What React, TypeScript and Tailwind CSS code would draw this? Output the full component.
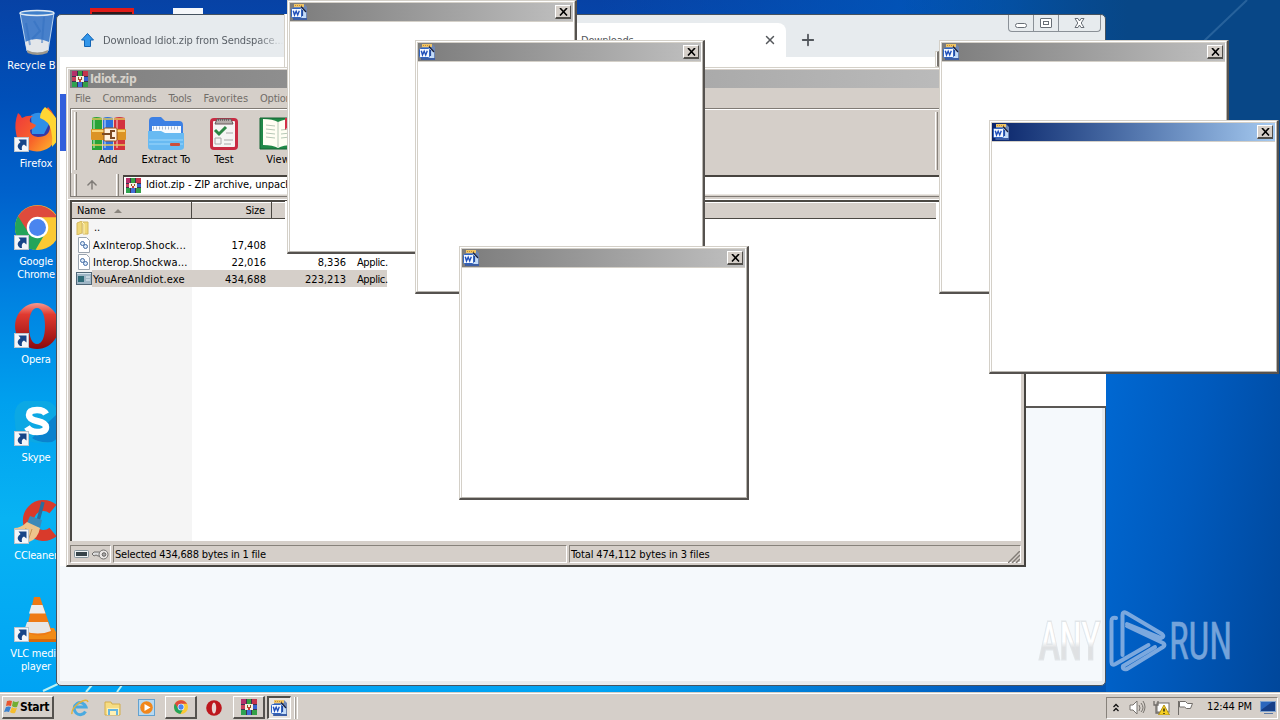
import type { ReactNode } from 'react';
import { ArrowUp, Plus, X } from 'lucide-react';
import clsx from 'clsx';

const popups = [
  { place: 'left-[287px] top-0', active: false },
  { place: 'left-[415px] top-[40px]', active: false },
  { place: 'left-[459px] top-[246px]', active: false },
  { place: 'left-[939px] top-[40px]', active: false },
  { place: 'left-[989px] top-[120px]', active: true },
];

const files = [
  { name: 'AxInterop.Shock...', size: '17,408', packed: '', type: '', kind: 'dll' },
  { name: 'Interop.Shockwa...', size: '22,016', packed: '8,336', type: 'Applic.', kind: 'dll' },
  { name: 'YouAreAnIdiot.exe', size: '434,688', packed: '223,213', type: 'Applic.', kind: 'exe' },
];

function WinRar({ className }: { className?: string }) {
  return (
    <svg viewBox="0 0 16 16" className={className} shapeRendering="crispEdges">
      <rect width="16" height="16" fill="#3c3350" />
      <rect x="0" y="0" width="5" height="5" fill="#b5306b" />
      <rect x="6" y="0" width="4" height="5" fill="#35a041" />
      <rect x="11" y="0" width="5" height="5" fill="#c4344c" />
      <rect x="0" y="6" width="16" height="4" fill="#3763cf" />
      <rect x="0" y="6" width="4" height="4" fill="#cb3f5c" />
      <rect x="0" y="11" width="5" height="5" fill="#2fa350" />
      <rect x="6" y="11" width="4" height="5" fill="#406ed8" />
      <rect x="11" y="11" width="5" height="5" fill="#35a048" />
      <rect x="4" y="5" width="8" height="6" fill="#f6efe2" />
      <rect x="6" y="6" width="1" height="3" fill="#8a5a26" />
      <rect x="9" y="6" width="1" height="3" fill="#8a5a26" />
      <rect x="7" y="8" width="2" height="3" fill="#cc3c38" />
    </svg>
  );
}

function WordIcon({ className }: { className?: string }) {
  return (
    <svg viewBox="0 0 16 16" className={className}>
      <path d="M3 0h10l3 3v13H3z" fill="#6d86b4" />
      <path d="M3 0h10v3H3z" fill="#eec569" />
      <path d="M4 1.500h8" stroke="#c98d2c" strokeDasharray="1 1" />
      <path d="M8 4h3l4 4v6H8z" fill="#c4dcf8" />
      <path d="M10 2.500l5 5.500" stroke="#1c2038" strokeWidth="1.200" />
      <path d="M11.500 6v6" stroke="#244aa0" strokeWidth="1.200" />
      <rect x=".5" y="4.500" width="10" height="9" rx="1" fill="#f5f9ff" stroke="#3064c0" />
      <path d="M2.300 6.700l1.200 4.200 1.700-3.600 1.500 3.600 1.600-4.200" fill="none" stroke="#1f4fba" strokeWidth="1.400" />
      <path d="M2 15h14" stroke="#2c51a0" strokeWidth="1.500" />
    </svg>
  );
}

function ChromeIcon({ className }: { className?: string }) {
  return (
    <svg viewBox="0 0 44 44" className={className}>
      <circle cx="22" cy="22" r="22" fill="#fbc934" />
      <path d="M22 22L3 11A22 22 0 0 0 20 44l10-17z" fill="#23a45a" />
      <path d="M22 12h19A22 22 0 0 0 3 11l10 16z" fill="#de4b3c" />
      <circle cx="22" cy="22" r="10.5" fill="#fff" />
      <circle cx="22" cy="22" r="8.3" fill="#4a85ef" />
    </svg>
  );
}

function OperaIcon({ className }: { className?: string }) {
  return (
    <svg viewBox="0 0 44 46" className={className}>
      <defs>
        <linearGradient id="opera" x2="0" y2="1">
          <stop offset="0" stopColor="#f59a90" />
          <stop offset=".25" stopColor="#e03a30" />
          <stop offset="1" stopColor="#8c0a0e" />
        </linearGradient>
      </defs>
      <path
        d="M22 0a22 23 0 1 0 .1 0zM22 5c5 0 8 7 8 18s-3 18-8 18-8-7-8-18 3-18 8-18z"
        fill="url(#opera)"
        fillRule="evenodd"
      />
    </svg>
  );
}

function RecycleBin() {
  return (
    <svg viewBox="0 0 48 48" className="h-12 w-12">
      <path d="M8 4h34l-6 38q-11 5-21 0z" fill="#7fb0e6" fillOpacity=".55" stroke="#b7d3ef" />
      <path d="M13 33q11-6 24 0l-1 9q-11 4-21 0z" fill="#e3e6ea" />
      <path d="M14 14l4 22M32 8l-2 26M22 12l6 10-8 8" stroke="#2f6dc0" strokeOpacity=".5" fill="none" strokeWidth="2" />
      <ellipse cx="25" cy="4" rx="17" ry="2.5" fill="#3f7fca" stroke="#dfeaf4" strokeWidth="1.3" />
      <path d="M15 41q10 5 21 0l-.5 3q-10 4-20 0z" fill="#9c978c" />
    </svg>
  );
}

function FirefoxIcon() {
  return (
    <svg viewBox="0 0 48 48" className="h-12 w-12">
      <defs>
        <linearGradient id="fox" x1="0" y1=".2" x2="1" y2="1">
          <stop offset="0" stopColor="#ee3a3c" />
          <stop offset=".5" stopColor="#f8632a" />
          <stop offset="1" stopColor="#ffc52c" />
        </linearGradient>
      </defs>
      <circle cx="26" cy="23" r="15" fill="#3338a6" />
      <path d="M19 8q12-7 19 7l-6 12H20z" fill="#2e8fe8" />
      <path d="M6 6q3 2 4 5 5-3 11-2-4 2-3 6l6 3q-1 3-6 5 0 6 8 7 12 0 12-11 0-8-5-12 0-4 3-7 8 8 10 20 0 13-8 20-10 7-21 3Q5 39 4 26 2 16 6 6z" fill="url(#fox)" />
      <path d="M28 11q0-6 5-11 13 10 15 20 0 13-8 20 1-9-1-17-2-9-11-12z" fill="#ffd633" />
    </svg>
  );
}

function SkypeIcon() {
  return (
    <svg viewBox="0 0 48 48" className="h-12 w-12">
      <path d="M12 0q12-3 26 1 12 8 10 22 0 12-8 18-12 3-24-1Q3 38 3 21 0 4 12 0z" fill="#0ca8e4" />
      <path d="M44 14q6 4 4 14 0 9-8 13-14 1-20-4z" fill="#0a82ce" />
      <path
        d="M34 13q-2-4-9-4-8 0-8 5 0 4 8 6 9 2 9 6 0 5-9 5-7 0-10-5"
        fill="none"
        stroke="#fff"
        strokeWidth="6.500"
      />
    </svg>
  );
}

function CCleanerIcon() {
  return (
    <svg viewBox="0 0 48 48" className="h-12 w-12">
      <path d="M41 10A15 15 0 1 0 41 33" fill="none" stroke="#d93a2b" strokeWidth="11" />
      <path d="M31 3L26 22" stroke="#2c6d9c" strokeWidth="3.5" />
      <path d="M18 17l12 4-2 8-13-5z" fill="#3d89b8" />
      <path d="M15 23l13 6q-2 11-11 14Q7 40 2 29q7 0 13-6z" fill="#edc48c" />
      <path d="M14 29l-3 9M20 30l-4 12" stroke="#c79556" />
    </svg>
  );
}

function VlcIcon() {
  return (
    <svg viewBox="0 0 48 48" className="h-12 w-12">
      <path d="M12 31h30l6 12H8z" fill="#f08a16" />
      <path d="M8 42h42v3H8z" fill="#d76a0c" />
      <path d="M22 0q3-3 6 0l12 35q-13 7-26 0z" fill="#ee7a14" />
      <path d="M19.500 8h11l3 8.500H17z" fill="#eeeeee" />
      <path d="M15 25h21l3 9q-13 5-27 0z" fill="#e6e6e6" />
    </svg>
  );
}

const shortcuts: { label: string; icon: ReactNode; link: boolean; width: string }[] = [
  { label: 'Recycle Bin', icon: <RecycleBin />, link: false, width: 'whitespace-nowrap tracking-[0.05px]' },
  { label: 'Firefox', icon: <FirefoxIcon />, link: true, width: 'whitespace-nowrap tracking-[0px]' },
  { label: 'Google Chrome', icon: <ChromeIcon className="ml-[3px] h-[45px] w-[45px]" />, link: true, width: 'w-[50px]' },
  { label: 'Opera', icon: <OperaIcon className="ml-[3px] h-[46px] w-[44px]" />, link: true, width: 'whitespace-nowrap' },
  { label: 'Skype', icon: <SkypeIcon />, link: true, width: 'whitespace-nowrap' },
  { label: 'CCleaner', icon: <CCleanerIcon />, link: true, width: 'whitespace-nowrap' },
  { label: 'VLC media player', icon: <VlcIcon />, link: true, width: 'w-[60px]' },
];

function Shortcuts() {
  return (
    <div className="flex w-[72px] flex-col pt-[9px]">
      {shortcuts.map((s) => (
        <div key={s.label} className="flex h-[98px] flex-col items-center">
          <div className="relative h-[50px] w-12">
            {s.icon}
            {s.link && (
              <svg viewBox="0 0 15 15" className="absolute bottom-[5px] left-[2px] h-[15px] w-[15px]">
                <rect x=".5" y=".5" width="14" height="14" fill="#f4f6f9" stroke="#bcc4cd" />
                <path d="M4.500 2.500h8v7l-2.500-2q-3 1-2 5.500h-2q-5-4 .5-8z" fill="#174587" />
              </svg>
            )}
          </div>
          <span className={clsx('text-center leading-[13px] text-white', s.width)}>{s.label}</span>
        </div>
      ))}
    </div>
  );
}

function Browser() {
  return (
    <div className="absolute left-[56px] top-[14px] flex h-[672px] w-[1050px] flex-col overflow-hidden rounded-[5px] border border-[#45525f] bg-[#e7ebee]">
      <div className="flex h-[42px] shrink-0 items-start">
        <div className="flex h-full w-[226px] items-center pl-[23px] pt-2">
          <svg viewBox="0 0 14 14" className="h-[14px] w-[15px] shrink-0">
            <path d="M7 .5L13 7h-3v6.5H4V7H1z" fill="#3296ea" stroke="#1264b4" />
          </svg>
          <span className="ml-2 mt-[2px] whitespace-nowrap bg-gradient-to-r from-[#555b62] from-85% to-[#e7ebee] bg-clip-text text-[11px] tracking-[-0.1px] text-transparent">
            Download Idiot.zip from Sendspace...
          </span>
        </div>
        <div className="h-full w-[278px]" />
        <div className="mt-2 flex h-[34px] w-[225px] items-center rounded-t-lg bg-white pl-5 pr-[9px] text-[11px] text-[#55585c]">
          <span className="mt-[2px]">Downloads</span>
          <X className="ml-auto h-[14px] w-[14px]" strokeWidth={2.5} />
        </div>
        <Plus className="ml-[13px] mt-[16px] h-[18px] w-[18px] text-[#53575c]" strokeWidth={2.4} />
        <div className="ml-auto mr-1 flex h-[17px] w-[93px] rounded-b border border-t-0 border-[#8a9097]">
          <div className="flex w-[25px] items-end justify-center border-r border-[#8a9097] pb-[3px]">
            <div className="h-[5px] w-[12px] rounded-sm border border-[#686e76] bg-white" />
          </div>
          <div className="flex w-[25px] items-center justify-center border-r border-[#8a9097]">
            <div className="flex h-[10px] w-[12px] items-center justify-center rounded-[1px] border border-[#686e76] bg-white">
              <div className="h-1 w-[6px] border border-[#686e76]" />
            </div>
          </div>
          <div className="flex flex-1 items-center justify-center">
            <svg viewBox="0 0 11 10" className="h-[10px] w-[11px]">
              <path d="M1 .5h3L5.5 3 7 .5h3L7.2 5 10 9.5H7L5.500 7 4 9.500H1L3.800 5z" fill="#fff" stroke="#686e76" />
            </svg>
          </div>
        </div>
      </div>
      <div className="mx-[3px] mb-1 flex flex-1 flex-col bg-[#f5f9fc]">
        <div className="h-[37px] bg-white" />
        <div className="h-[57px] w-[6px] bg-[#315fdc]" />
        <div className="h-[415px] w-[6px] bg-white" />
      </div>
    </div>
  );
}

function Grip({ className }: { className: string }) {
  return <div className={clsx('w-[3px] border-l border-r border-l-white border-r-[#87827b]', className)} />;
}

function AddIcon() {
  return (
    <svg viewBox="0 0 36 36" className="h-9 w-9">
      <path d="M2 2q4-2 10 0v32H2z" fill="#29a336" />
      <path d="M13 2q4-2 10 0v32H13z" fill="#2b72e0" />
      <path d="M24 2q5-2 11 0v32H24z" fill="#d3323e" />
      <path d="M4 4v28M15 4v28M27 4v28" stroke="#fff" strokeOpacity=".4" strokeWidth="2" />
      <path d="M2 3h10M13 3h10M24 3h11M2 29h10M13 29h10M24 29h11" stroke="#e4c65a" strokeWidth="1.5" />
      <rect x="1" y="13" width="35" height="11" rx="1" fill="#dc9324" />
      <path d="M2 15h33" stroke="#f9d478" strokeWidth="2" />
      <rect x="14" y="12" width="13" height="13" rx="1" fill="#fff1df" stroke="#9c5716" />
      <path d="M12 18h8M25 15h-4v7h4" fill="none" stroke="#7d4a22" strokeWidth="2" />
    </svg>
  );
}

function ExtractIcon() {
  return (
    <svg viewBox="0 0 36 36" className="h-9 w-9">
      <path d="M1 5q0-4 4-4h8l4 4h14q4 0 4 4v18H1z" fill="#3c80e4" />
      <rect x="4" y="10" width="29" height="10" fill="#f7faff" />
      <path d="M5 12h27" stroke="#a9b9d0" strokeDasharray="1 2" strokeWidth="3" />
      <path d="M0 15h13l4 2h19v14q0 3-4 3H4q-4 0-4-3z" fill="#68baf2" />
      <path d="M1 24h34M1 28h34" stroke="#9ed8fb" strokeOpacity=".5" strokeWidth="2" />
      <rect x="22" y="27" width="10" height="3" rx="1" fill="#cc4d3b" />
    </svg>
  );
}

function TestIcon() {
  return (
    <svg viewBox="0 0 36 36" className="h-9 w-9">
      <rect x="4" y="2" width="28" height="32" rx="4" fill="#c92b43" />
      <rect x="7" y="5" width="22" height="26" rx="1" fill="#f5f5f4" />
      <path d="M11 3h14l2 5H9z" fill="#b3acaa" stroke="#665558" />
      <path d="M12 4h12" stroke="#3d3638" strokeDasharray="1 1" />
      <path d="M9 14l4 4 7-7" fill="none" stroke="#2c8645" strokeWidth="3" />
      <path d="M20 17h7M18 24h9M18 28h7M9 22h6v6H9z" stroke="#a8a8a8" fill="none" />
    </svg>
  );
}

function ViewIcon() {
  return (
    <svg viewBox="0 0 38 36" className="h-9 w-[38px]">
      <path d="M1 2h36v31H1z" fill="#218847" stroke="#146433" />
      <path d="M4 3q10 0 15 3 6-3 15-3v26q-10 0-15 3-5-3-15-3z" fill="#fffef3" />
      <path d="M19 6v25M7 9l9 1M7 13l9 1M7 17l9 1M7 21l9 1M22 14l9-1M22 18l9-1M22 22l9-1" stroke="#b6c8b6" />
      <path d="M26 2h8v12l-4-4-4 4z" fill="#d22f46" />
    </svg>
  );
}

const tools = [
  { label: 'Add', icon: <AddIcon />, width: 'w-[58px]' },
  { label: 'Extract To', icon: <ExtractIcon />, width: 'w-[58px]' },
  { label: 'Test', icon: <TestIcon />, width: 'w-[58px]' },
  { label: 'View', icon: <ViewIcon />, width: 'w-[50px]' },
];

function FileIcon({ kind }: { kind: string }) {
  if (kind === 'exe') {
    return (
      <svg viewBox="0 0 16 13" className="h-[13px] w-4 shrink-0">
        <rect x=".5" y=".5" width="15" height="12" fill="#9fb6c6" stroke="#506676" />
        <path d="M1 1.500h14" stroke="#d8e6ee" />
        <rect x="2" y="4" width="6" height="6" fill="#2f6b78" />
        <path d="M10 5h4M10 8h4" stroke="#e7f0f5" />
      </svg>
    );
  }
  return (
    <svg viewBox="0 0 16 16" className="h-4 w-4 shrink-0">
      <path d="M2.500.5h8l3 3v12h-11z" fill="#fff" stroke="#9aa4af" />
      <circle cx="6.500" cy="6.500" r="2" fill="#dceaf8" stroke="#426ba4" />
      <circle cx="9.500" cy="9.500" r="2" fill="#dceaf8" stroke="#426ba4" />
    </svg>
  );
}

function Archive() {
  return (
    <div className="absolute left-[66px] top-[67px] flex h-[500px] w-[960px] flex-col border border-b-2 border-r-2 border-[#d4d0c8] border-b-[#45433f] border-r-[#45433f] bg-[#d5cfc9] shadow-[inset_1px_1px_0_#fff]">
      <div className="mx-[3px] mt-[2px] flex h-[18px] shrink-0 items-center bg-gradient-to-r from-[#808080] to-[#c0c0c0] pl-[2px] text-[12px] font-bold text-[#d6d1ca]">
        <WinRar className="mr-[2px] h-4 w-4" />
        <span className="tracking-[-0.4px]">Idiot.zip</span>
      </div>
      <div className="flex h-5 shrink-0 items-center gap-[12px] pl-[8px] pt-[2px] tracking-[-0.25px] text-[#716d68]">
        <span>File</span>
        <span>Commands</span>
        <span>Tools</span>
        <span className="tracking-[0px]">Favorites</span>
        <span>Options</span>
      </div>
      <div className="mx-[3px] flex h-[65px] shrink-0 border-l border-t border-[#807b75] pl-[3px] pt-[3px] shadow-[inset_1px_1px_0_#fff]">
        <Grip className="h-[58px]" />
        <div className="ml-[2px] flex">
          {tools.map((tool) => (
            <div key={tool.label} className={clsx('flex flex-col items-center whitespace-nowrap pt-1 tracking-[0px] text-black', tool.width)}>
              {tool.icon}
              <span className="mt-[1px] leading-[14px]">{tool.label}</span>
            </div>
          ))}
        </div>
        <Grip className="ml-auto mr-[83px] h-[58px]" />
      </div>
      <div className="mx-[3px] flex h-[24px] shrink-0 items-center border-b border-l border-[#807b75] pl-[3px]">
        <Grip className="h-[22px]" />
        <ArrowUp className="ml-[8px] h-[14px] w-[14px] text-[#7f7b77]" strokeWidth={2.5} />
        <div className="ml-[17px]"><Grip className="h-[22px]" /></div>
        <div className="ml-[4px] flex h-[20px] flex-1 items-center border border-t-2 border-[#47443f] border-b-[#e9e6e1] bg-white pl-[1px] text-black">
          <WinRar className="mr-[5px] h-[15px] w-4" />
          <span className="tracking-[-0.05px]">Idiot.zip - ZIP archive, unpacked size 474,112 bytes</span>
        </div>
      </div>
      <div className="h-[3px] shrink-0 border-b border-white" />
      <div className="ml-[3px] mr-[3px] flex min-h-0 flex-1 flex-col border-l-2 border-t-2 border-[#4b4843] bg-white">
        <div className="flex h-[17px] w-[864px] shrink-0 border-b border-[#4b4843] bg-[#d5cfc9] text-black shadow-[inset_0_1px_0_#fff]">
          <div className="flex w-[120px] items-center gap-[9px] border-r border-[#4b4843] pl-[5px] pt-[2px]">
            Name
            <div className="h-0 w-0 border-x-4 border-b-4 border-x-transparent border-b-[#8a857e]" />
          </div>
          <div className="flex w-[80px] items-center justify-end border-r border-[#4b4843] pr-[6px] pt-[2px]">Size</div>
          <div className="w-[14px]" />
        </div>
        <div className="min-h-0 flex-1 bg-[linear-gradient(to_right,#f5f5f5_120px,white_120px)] text-black">
          <div className="flex h-[17px] items-center gap-1 pl-1 pt-px">
            <svg viewBox="0 0 14 14" className="h-[14px] w-[14px]">
              <path d="M1 2l5-2v12l-5 2zM7 1h5v12H7z" fill="#efd777" stroke="#d3b760" />
              <path d="M6 1l2 2v10" stroke="#fff4bd" fill="none" />
            </svg>
            ..
          </div>
          {files.map((file) => (
            <div key={file.name} className="flex h-[17px] items-center pl-1">
              <FileIcon kind={file.kind} />
              <div className={clsx('flex h-full w-[295px] items-center whitespace-nowrap pt-[2px] leading-[14px]', file.kind === 'exe' && 'bg-[#d5cfc9]')}>
                <span className="w-[99px] shrink-0 pl-[1px] tracking-[0.15px]">{file.name}</span>
                <span className="w-[75px] shrink-0 text-right tracking-[0px]">{file.size}</span>
                <span className="w-[80px] shrink-0 text-right tracking-[0px]">{file.packed}</span>
                <span className="ml-[11px] shrink-0 tracking-[-0.4px]">{file.type}</span>
              </div>
            </div>
          ))}
        </div>
      </div>
      <div className="mx-[3px] mb-[2px] mt-[4px] flex h-[18px] shrink-0 gap-[2px] text-black">
        <div className="flex w-[41px] items-center gap-[3px] border border-[#87827b] border-b-white border-r-white pl-[3px]">
          <svg viewBox="0 0 15 8" className="h-2 w-[15px]">
            <rect x=".5" y=".5" width="14" height="7" rx="1" fill="#edf2f4" stroke="#84949b" />
            <rect x="2" y="2" width="11" height="4" fill="#36444a" />
          </svg>
          <svg viewBox="0 0 17 11" className="h-[11px] w-[17px]">
            <path d="M8 3H2L0 5l2 2 2-1 2 1h2" fill="#ddd" stroke="#716f6d" />
            <circle cx="11.500" cy="5.500" r="4.500" fill="#ece9e7" stroke="#716f6d" />
            <circle cx="12" cy="5.500" r="1.800" fill="#aaa" stroke="#656260" />
          </svg>
        </div>
        <div className="flex w-[454px] items-center border border-[#87827b] border-b-white border-r-white pl-[1px] pt-[2px] leading-[14px]">Selected 434,688 bytes in 1 file</div>
        <div className="flex flex-1 items-center border border-[#87827b] border-b-white border-r-white pl-[1px] pt-[2px] leading-[14px] tracking-[-0.13px]">
          Total 474,112 bytes in 3 files
          <svg viewBox="0 0 12 12" className="ml-auto mt-1 h-3 w-3">
            <path d="M0 12L12 0M4 12l8-8M8 12l4-4" stroke="#817c76" strokeWidth="1.500" />
          </svg>
        </div>
      </div>
    </div>
  );
}

function Popup({ place, active }: { place: string; active: boolean }) {
  return (
    <div className={clsx('absolute h-[254px] w-[290px] border border-b-2 border-r-2 border-[#d4d0c8] border-b-[#55524f] border-r-[#55524f] bg-white', place)}>
      <div className="h-full border border-white border-b-[#b8b5af] border-r-[#b8b5af]">
        <div className="flex h-full flex-col border border-b-0 border-[#d4d0c8] border-r-white">
          <div className={clsx('flex h-[18px] shrink-0 items-center justify-between bg-gradient-to-r pl-[1px] pr-[2px]', active ? 'from-[#0a246a] to-[#a6caf0]' : 'from-[#7c7c7c] to-[#c0c0c0]')}>
            <WordIcon className="h-4 w-4" />
            <div className="flex h-[14px] w-4 items-center justify-center border border-b-2 border-white border-b-[#504e4a] border-r-[#504e4a] bg-[#d5cfc9]">
              <svg viewBox="0 0 9 8" className="h-2 w-[9px]">
                <path d="M1 0l7 7.500M8 0L1 7.500" stroke="#000" strokeWidth="1.600" />
              </svg>
            </div>
          </div>
          <div className="h-px bg-[#d4d0c8]" />
        </div>
      </div>
    </div>
  );
}

function Watermark() {
  return (
    <svg viewBox="0 0 200 70" className="absolute left-[1036px] top-[606px] h-[70px] w-[200px]">
      <defs>
        <linearGradient id="any" x2="0" y2="1">
          <stop offset="0" stopColor="#fff" />
          <stop offset=".5" stopColor="#fff" />
          <stop offset=".6" stopColor="#dfe1e3" />
        </linearGradient>
      </defs>
      <g className="font-[Roboto]" fontSize="51" fontWeight="400">
        <text x="3" y="53" textLength="61" lengthAdjust="spacingAndGlyphs" fill="#a9adb1" opacity=".25" stroke="#a9adb1" strokeWidth="3">ANY</text>
        <text x="3" y="53" textLength="61" lengthAdjust="spacingAndGlyphs" fill="url(#any)">ANY</text>
        <text x="133" y="53" textLength="63" lengthAdjust="spacingAndGlyphs" fill="#74a3da" stroke="#74a3da" strokeWidth=".5">RUN</text>
      </g>
      <path
        d="M80 12q-4.500-1-4.500 3v41q0 4 4 2l33-19M86.500 49V9q0-4 4-2L126 28q3 3-1 4L91 18M91 20l36 17q3 2 0 4L91 63q-5 1-4-3l32-19"
        fill="none"
        stroke="#7ba8de"
        strokeWidth="4"
        strokeLinejoin="round"
        strokeLinecap="round"
      />
    </svg>
  );
}

const raised = 'border border-b-2 border-r-2 border-white border-b-[#55524e] border-r-[#55524e]';

function Taskbar() {
  return (
    <div className="flex h-[28px] items-center border-t border-[#d4d0c8] bg-[#d5cfc9] pl-[2px] pr-[2px] text-black shadow-[inset_0_1px_0_#fff]">
      <div className={clsx('mt-[2px] flex h-[23px] w-[52px] items-center pl-[1px] font-bold', raised)}>
        <svg viewBox="0 0 16 14" className="h-[14px] w-4">
          <path d="M3 1q3-1 5 0L7 6q-3-1-5 0z" fill="#e8552e" />
          <path d="M9 1q3 2 6 0l-2 6q-3 1-5-1z" fill="#72ae35" />
          <path d="M2 7q3-1 5 0l-2 5q-2-1-5 0z" fill="#3b82cf" />
          <path d="M8 7q2 2 5 1l-2 5q-3 1-5-1z" fill="#f5bd2e" />
        </svg>
        <span className="text-[12px] tracking-[-0.3px]">Start</span>
      </div>
      <div className="mt-[2px] flex items-center">
        <svg viewBox="0 0 18 18" className="ml-[17px] h-[18px] w-[18px]">
          <path d="M14.500 12.500a6 6 0 1 1 .5-4.500H5" fill="none" stroke="#4aaae0" strokeWidth="3" />
          <path d="M1 15Q0 10 8 4q8-5 9-1" fill="none" stroke="#e4b33a" strokeWidth="1.500" />
        </svg>
        <svg viewBox="0 0 18 16" className="ml-[15px] h-4 w-[18px]">
          <path d="M1 2h6l1 2h8v11H1z" fill="#f6dc83" stroke="#d4ad4d" />
          <path d="M3 8h12v7H3z" fill="#fff1b4" />
          <path d="M5 15v-5h8v5" fill="none" stroke="#67b5df" strokeWidth="2" />
        </svg>
        <svg viewBox="0 0 17 17" className="ml-[16px] h-[17px] w-[17px]">
          <rect x=".5" y=".5" width="16" height="16" fill="#b7d9f1" stroke="#63a2d0" />
          <circle cx="8.500" cy="8.500" r="6.300" fill="#f1871c" />
          <path d="M6.500 5l6 3.500-6 3.500z" fill="#fff" />
        </svg>
        <div className={clsx('ml-[10px] flex h-[23px] w-8 items-center justify-center', raised)}>
          <ChromeIcon className="h-[14px] w-[14px]" />
        </div>
        <svg viewBox="0 0 16 16" className="ml-[9px] h-4 w-4">
          <circle cx="8" cy="8" r="7.800" fill="#bd171d" />
          <ellipse cx="8" cy="8" rx="2.200" ry="5.500" fill="#e9d6d4" />
        </svg>
        <div className={clsx('ml-[11px] flex h-[23px] w-8 items-center justify-center', raised)}>
          <WinRar className="h-4 w-4" />
        </div>
        <div className="ml-[2px] flex h-[23px] w-[24px] items-center border border-l-2 border-t-2 border-white border-l-[#504e4a] border-t-[#504e4a] bg-[#e8e4df] pl-[2px]">
          <WordIcon className="h-[16px] w-[16px]" />
        </div>
        <div className="h-[22px] w-[4px] border-r border-white" />
        <div className="h-[22px] w-[3px] border-l border-r border-l-[#a5a19b] border-r-white" />
      </div>
      <div className="ml-auto mt-[2px] flex h-[22px] w-[172px] items-center border border-[#87827b] border-b-white border-r-white pl-[6px]">
        <svg viewBox="0 0 6 9" className="h-[9px] w-[6px]">
          <path d="M.5 4L3 1.500 5.500 4M.5 8L3 5.500 5.500 8" fill="none" stroke="#111" strokeWidth="1.300" />
        </svg>
        <svg viewBox="0 0 17 15" className="ml-[10px] h-[15px] w-[17px]">
          <path d="M1 5h3l4-4v13l-4-4H1z" fill="#fff" stroke="#77736e" />
          <path d="M10 5q2 3 0 6M12 3q4 5 0 9M14 1q4 6 0 12" stroke="#77736e" fill="none" />
        </svg>
        <svg viewBox="0 0 17 15" className="ml-[7px] h-[15px] w-[17px]">
          <rect x="4" y="3" width="12" height="9" fill="#fff" stroke="#716d69" />
          <path d="M1 1v4h4V1M3 5v8h4" fill="none" stroke="#716d69" strokeWidth="1.300" />
          <path d="M11 5l5.500 10h-11z" fill="#f6cf22" stroke="#b3931a" />
          <path d="M11 8.500v3M11 13v1" stroke="#111" strokeWidth="1.300" />
        </svg>
        <svg viewBox="0 0 17 15" className="ml-[7px] h-[15px] w-[17px]">
          <path d="M1.500 1v14" stroke="#716d69" />
          <path d="M2.500 1.500h6l2 2h5l-2 5h-4l-2-1.500h-5z" fill="#fff" stroke="#716d69" />
        </svg>
        <span className="ml-[13px] whitespace-nowrap tracking-[-0.15px]">12:44 PM</span>
        <svg viewBox="0 0 16 13" className="ml-auto mr-[1px] h-[13px] w-4">
          <rect x=".5" y=".5" width="15" height="10" fill="#2b66bd" stroke="#82a4ce" />
          <path d="M1 9L12 1h3v9H1z" fill="#163f88" />
          <path d="M4 12.500h9" stroke="#5c79a5" />
        </svg>
      </div>
    </div>
  );
}

export default function App() {
  return (
    <div className="flex h-[720px] w-[1280px] flex-col overflow-hidden bg-white font-['DejaVu_Sans_Condensed','DejaVu_Sans',sans-serif] text-[11px] tracking-[-0.2px] [font-stretch:condensed]">
      <div className="relative h-[692px] overflow-hidden bg-[linear-gradient(to_bottom,#0742a5_0,#004fb8_14%,#0062cc_28%,#0080e0_42%,#00a0ee_58%,#08b3f3_75%,#00a3f3_100%)]">
        {/* darker right half of the wallpaper */}
        <div className="absolute inset-y-0 right-0 w-[680px] bg-[linear-gradient(to_right,transparent,#0058bc_60%,#0050aa_85%,#004390_100%)]" />
        <div className="absolute right-0 top-0 h-[374px] w-[380px] bg-[linear-gradient(to_right,transparent,#084787_60%)]" />
        <div className="absolute bottom-0 left-[1106px] h-[318px] w-[174px] bg-[linear-gradient(100deg,#0068d2,#005abd_45%,#00479b)]" />
        <svg viewBox="0 0 60 60" className="absolute left-[1195px] top-0 h-[60px] w-[60px]">
          <path d="M52 0L8 42" stroke="#72a1ce" strokeOpacity=".3" strokeWidth="2" />
        </svg>
        <svg viewBox="0 0 100 12" className="absolute bottom-0 left-[38px] h-3 w-[100px]">
          <path d="M5 11L22 3M48 12l6-7M79 12l5-7" stroke="#bbf1f3" strokeWidth="2" />
        </svg>
        <Shortcuts />
        <div className="absolute left-[90px] top-2 h-5 w-[44px] border-2 border-t-4 border-[#e01b18] bg-[#301919]" />
        <div className="absolute left-[173px] top-2 h-5 w-[30px] bg-[#f5f7fa]" />
        <Browser />
        <div className="absolute left-[284px] top-[14px] h-[53px] w-[3px] border-l border-[#d4d0c8] bg-white" />
        <div className="absolute left-[935px] top-[51px] h-4 w-1 border border-r-2 border-[#d4d0c8] border-r-[#77736e] bg-white" />
        {/* leftover of a dragged window */}
        <div className="absolute left-[1026px] top-[368px] h-10 w-20 border-b-2 border-[#5a5754] bg-white" />
        <Archive />
        <div className="absolute left-[285px] top-[201px] h-[53px] w-[2px] bg-white" />
        {popups.map((p) => (
          <Popup key={p.place} {...p} />
        ))}
        <Watermark />
      </div>
      <Taskbar />
    </div>
  );
}
